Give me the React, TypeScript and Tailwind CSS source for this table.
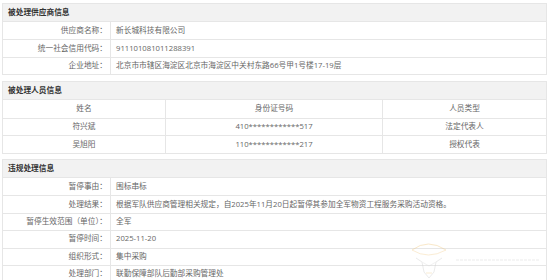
import React from "react";

const font = {
  fontFamily: '"Open Sans", "Noto Sans CJK SC", sans-serif',
};

function Header({ title }: { title: string }) {
  return (
    <div className="h-[18px] bg-[#f2f2f2] border-b border-[#e6e6e6] pl-[5px] flex items-center text-[7.7px] font-bold text-[#333]">
      {title}
    </div>
  );
}

function KVRow({ label, value, first }: { label: string; value: string; first?: boolean }) {
  return (
    <div className={`flex h-[17.4px] ${first ? "" : "border-t border-[#e6e6e6]"}`}>
      <div className="w-[108px] shrink-0 border-r border-[#e6e6e6] pr-[3px] flex items-center justify-end text-[#666] whitespace-nowrap">
        {label}
      </div>
      <div className="flex-1 pl-[5px] flex items-center text-[#666] whitespace-nowrap">{value}</div>
    </div>
  );
}

function Section({ title, children, className }: { title: string; children: React.ReactNode; className?: string }) {
  return (
    <div className={`border border-[#e6e6e6] bg-white ${className ?? ""}`}>
      <Header title={title} />
      {children}
    </div>
  );
}

export default function App() {
  const people = [
    ["姓名", "身份证号码", "人员类型"],
    ["符兴斌", "410************517", "法定代表人"],
    ["吴旭阳", "110************217", "授权代表"],
  ];
  return (
    <div className="relative w-[550px] h-[280px] bg-white overflow-hidden text-[7.7px] leading-none" style={font}>
      <div className="px-[2px] pt-[3px] flex flex-col">
        <Section title="被处理供应商信息" className="w-[545px]">
          <KVRow first label="供应商名称：" value="新长城科技有限公司" />
          <KVRow label="统一社会信用代码：" value="911101081011288391" />
          <KVRow label="企业地址：" value="北京市市辖区海淀区北京市海淀区中关村东路66号甲1号楼17-19层" />
        </Section>

        <Section title="被处理人员信息" className="w-[545px] mt-[6px]">
          {people.map((r, i) => (
            <div key={i} className={`flex h-[17.6px] ${i === 0 ? "" : "border-t border-[#e6e6e6]"}`}>
              <div className="w-[30%] border-r border-[#e6e6e6] flex items-center justify-center text-[#666]">{r[0]}</div>
              <div className="w-[40%] border-r border-[#e6e6e6] flex items-center justify-center text-[#666]">{r[1]}</div>
              <div className="w-[30%] flex items-center justify-center text-[#666]">{r[2]}</div>
            </div>
          ))}
        </Section>

        <Section title="违规处理信息" className="w-[545px] mt-[5px]">
          <KVRow first label="暂停事由：" value="围标串标" />
          <KVRow label="处理结果：" value="根据军队供应商管理相关规定，自2025年11月20日起暂停其参加全军物资工程服务采购活动资格。" />
          <KVRow label="暂停生效范围（单位）：" value="全军" />
          <KVRow label="暂停时间：" value="2025-11-20" />
          <KVRow label="组织形式：" value="集中采购" />
          <KVRow label="处理部门：" value="联勤保障部队后勤部采购管理处" />
        </Section>
      </div>

      <div className="absolute left-[408px] top-[242px] opacity-40 pointer-events-none">
        <svg width="135" height="38" viewBox="0 0 135 38" fill="none">
          <path d="M4 8 Q20 -4 38 8" stroke="#f2c77a" strokeWidth="1" />
          <path d="M4 8 Q20 18 38 8" stroke="#f2c77a" strokeWidth="0.8" />
          <path d="M8 16 L14 20 L16 30 L21 36 L26 30 L28 20 L34 16" stroke="#cfcfcf" strokeWidth="1" />
          <path d="M14 20 L21 24 L28 20" stroke="#d8d8d8" strokeWidth="0.8" />
          <path d="M18 31 L24 31" stroke="#f2c77a" strokeWidth="0.8" />
          <line x1="48" y1="18" x2="132" y2="18" stroke="#e0e0e0" strokeWidth="1.5" strokeDasharray="3 1" />
        </svg>
      </div>
    </div>
  );
}
